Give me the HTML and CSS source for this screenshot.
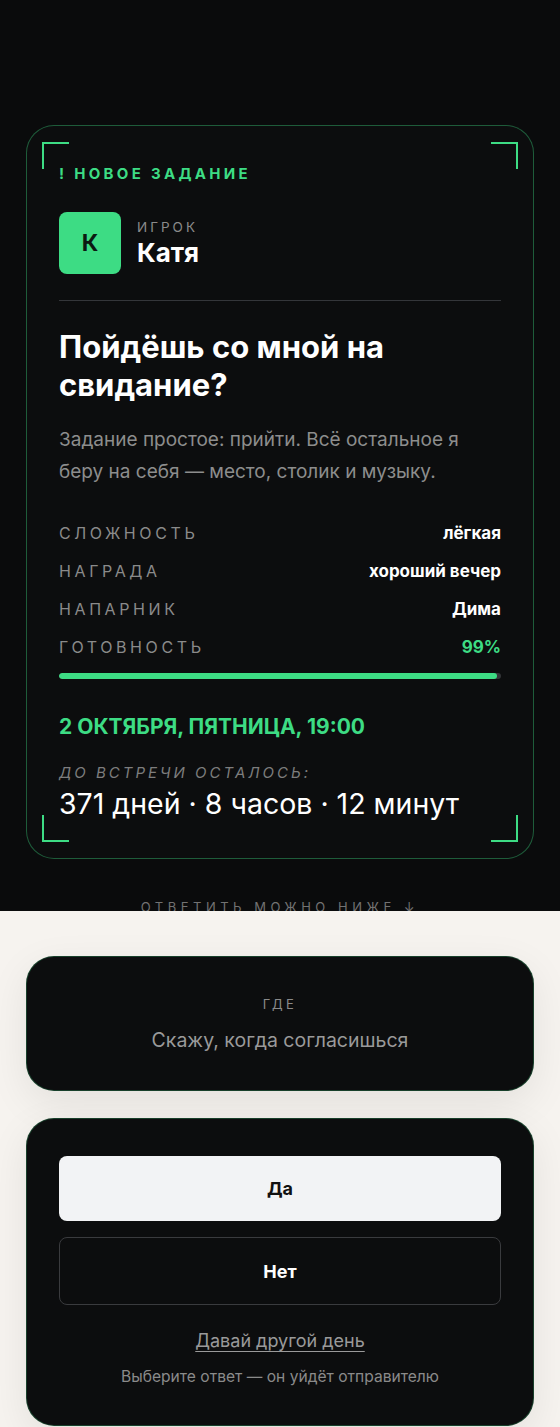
FILE: index.html
```html
<!DOCTYPE html>
<html lang="ru">
<head>
<meta charset="utf-8">
<link rel="stylesheet" href="styles.css">
</head>
<body>
<section class="hero">
  <article class="quest">
    <span class="corner tl"></span>
    <span class="corner tr"></span>
    <span class="corner bl"></span>
    <span class="corner br"></span>
    <div class="tag">! НОВОЕ ЗАДАНИЕ</div>
    <div class="player">
      <div class="avatar">К</div>
      <div class="player-info">
        <div class="player-label">ИГРОК</div>
        <div class="player-name">Катя</div>
      </div>
    </div>
    <hr class="divider">
    <h1 class="title">Пойдёшь со мной на свидание?</h1>
    <p class="desc">Задание простое: прийти. Всё остальное я беру на себя — место, столик и музыку.</p>
    <dl class="stats">
      <div class="row"><dt>СЛОЖНОСТЬ</dt><dd>лёгкая</dd></div>
      <div class="row"><dt>НАГРАДА</dt><dd>хороший вечер</dd></div>
      <div class="row"><dt>НАПАРНИК</dt><dd>Дима</dd></div>
      <div class="row"><dt>ГОТОВНОСТЬ</dt><dd class="green">99%</dd></div>
    </dl>
    <div class="bar"><div class="bar-fill" style="width: 99%"></div></div>
    <div class="date">2 ОКТЯБРЯ, ПЯТНИЦА, 19:00</div>
    <div class="left-label">ДО ВСТРЕЧИ ОСТАЛОСЬ:</div>
    <div class="countdown">371 дней · 8 часов · 12 минут</div>
  </article>
  <div class="hint">ОТВЕТИТЬ МОЖНО НИЖЕ ↓</div>
</section>
<section class="answer">
  <div class="card where">
    <div class="where-label">ГДЕ</div>
    <div class="where-text">Скажу, когда согласишься</div>
  </div>
  <div class="card reply">
    <button class="btn yes">Да</button>
    <button class="btn no">Нет</button>
    <a class="other" href="#">Давай другой день</a>
    <div class="note">Выберите ответ — он уйдёт отправителю</div>
  </div>
</section>
</body>
</html>
```

FILE: styles.css
```css
* { box-sizing: border-box; }
html, body { margin: 0; padding: 0; }
body {
  font-family: Inter, "Noto Sans", sans-serif;
  background: #f6f3ef;
  color: #fff;
}
.hero {
  background: #0a0b0c;
  height: 911px;
  overflow: hidden;
  padding: 125px 26px 0;
  display: flex;
  flex-direction: column;
}
.quest {
  position: relative;
  background: #0c0d0e;
  border: 1px solid rgba(61, 220, 132, 0.38);
  border-radius: 28px;
  padding: 38px 32px 37px;
  display: flex;
  flex-direction: column;
}
.corner {
  position: absolute;
  width: 27px;
  height: 27px;
  border-color: #3ddc84;
  border-style: solid;
  border-width: 0;
}
.corner.tl { top: 16px; left: 15px; border-top-width: 2px; border-left-width: 2px; }
.corner.tr { top: 16px; right: 15px; border-top-width: 2px; border-right-width: 2px; }
.corner.bl { bottom: 16px; left: 15px; border-bottom-width: 2px; border-left-width: 2px; }
.corner.br { bottom: 16px; right: 15px; border-bottom-width: 2px; border-right-width: 2px; }
.tag {
  color: #3ddc84;
  font-weight: 700;
  font-size: 15px;
  line-height: 20px;
  letter-spacing: 3.3px;
}
.player {
  margin-top: 28px;
  display: flex;
  align-items: center;
  gap: 16px;
}
.avatar {
  width: 62px;
  height: 62px;
  border-radius: 8px;
  background: #3ddc84;
  color: #0c1a12;
  font-weight: 700;
  font-size: 23px;
  display: flex;
  align-items: center;
  justify-content: center;
}
.player-label {
  font-size: 13.5px;
  line-height: 18px;
  letter-spacing: 3px;
  color: #8a8a8a;
}
.player-name {
  margin-top: 2px;
  font-size: 26px;
  line-height: 30px;
  font-weight: 700;
}
.divider {
  margin: 26px 0 0;
  border: 0;
  height: 1px;
  background: #34363a;
}
.title {
  margin: 27px 0 0;
  font-size: 31px;
  line-height: 38px;
  font-weight: 700;
}
.desc {
  margin: 20px 0 0;
  font-size: 19px;
  line-height: 32px;
  color: #8d8d8d;
}
.stats {
  margin: 26px 0 0;
}
.row {
  display: flex;
  justify-content: space-between;
  align-items: center;
  height: 38px;
}
.row dt {
  font-size: 16px;
  letter-spacing: 3.6px;
  color: #8a8a8a;
}
.row dd {
  margin: 0;
  font-size: 17px;
  font-weight: 700;
  color: #fff;
}
.row dd.green { color: #3ddc84; }
.bar {
  margin-top: 7px;
  height: 6px;
  border-radius: 3px;
  background: #333538;
  overflow: hidden;
}
.bar-fill {
  height: 100%;
  background: #3ddc84;
  border-radius: 3px;
}
.date {
  margin-top: 35px;
  color: #3ddc84;
  font-weight: 700;
  font-size: 21px;
  line-height: 26px;
}
.left-label {
  margin-top: 23px;
  font-size: 15px;
  line-height: 20px;
  font-style: italic;
  letter-spacing: 3px;
  color: #7d7d7d;
}
.countdown {
  margin-top: 4px;
  font-size: 28.5px;
  line-height: 34px;
}
.hint {
  margin-top: 40px;
  text-align: center;
  font-size: 13px;
  line-height: 16px;
  letter-spacing: 4.5px;
  color: #727272;
}
.answer {
  padding: 45px 26px 40px;
  display: flex;
  flex-direction: column;
  gap: 27px;
}
.card {
  background: #0c0d0e;
  border: 1px solid rgba(61, 220, 132, 0.25);
  border-radius: 28px;
  box-shadow: 0 12px 40px rgba(0, 0, 0, 0.08);
}
.where {
  padding: 38px 24px 37px;
  text-align: center;
}
.where-label {
  font-size: 13px;
  line-height: 18px;
  letter-spacing: 3.5px;
  color: #8a8a8a;
}
.where-text {
  margin-top: 14px;
  font-size: 19.5px;
  line-height: 26px;
  color: #9a9a9a;
}
.reply {
  padding: 37px 32px 38px;
  display: flex;
  flex-direction: column;
  align-items: center;
}
.btn {
  width: 100%;
  height: 65px;
  border-radius: 8px;
  font-family: inherit;
  font-size: 18px;
  font-weight: 700;
  cursor: pointer;
}
.btn.yes {
  background: #f2f3f5;
  color: #111;
  border: 0;
}
.btn.no {
  margin-top: 16px;
  background: transparent;
  color: #fff;
  border: 1px solid #3a3b3e;
  height: 68px;
}
.other {
  margin-top: 24px;
  font-size: 18px;
  line-height: 24px;
  color: #9a9a9a;
  text-decoration: underline;
  text-underline-offset: 4px;
  text-decoration-thickness: 1px;
}
.note {
  margin-top: 14px;
  font-size: 15.6px;
  line-height: 20px;
  color: #8a8a8a;
}
```
